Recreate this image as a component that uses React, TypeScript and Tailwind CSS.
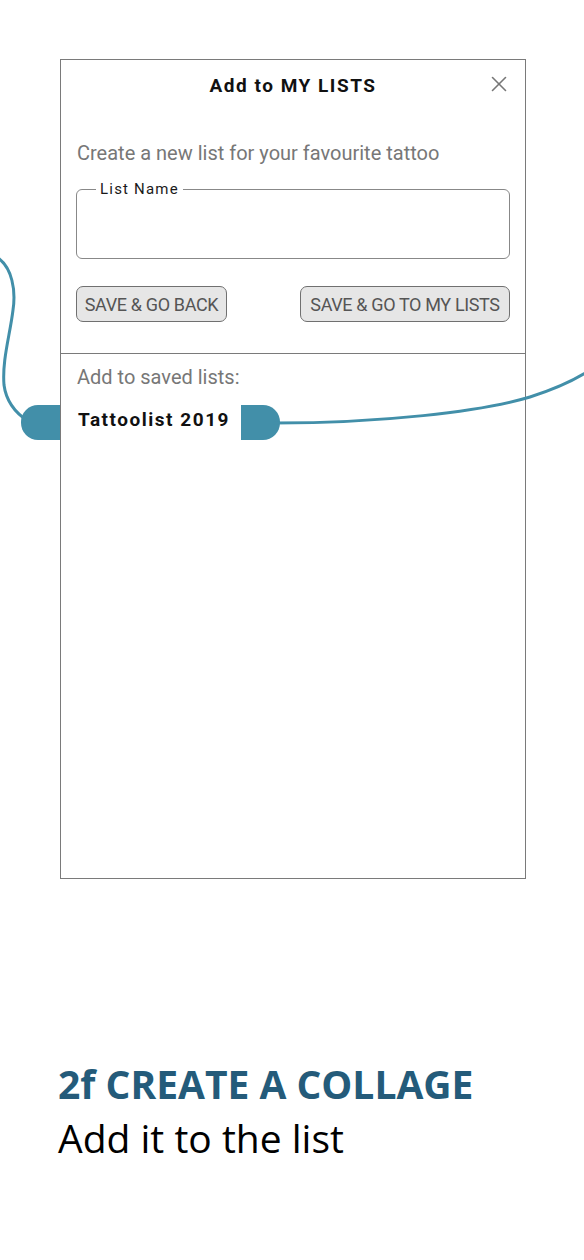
import { X } from "lucide-react";

const roboto = { fontFamily: "Roboto, 'Liberation Sans', sans-serif" };

export default function App() {
  return (
    <div className="relative w-[584px] h-[1260px] bg-white overflow-hidden">
      {/* dialog */}
      <div className="ml-[60px] mt-[59px] w-[466px] h-[820px] border border-[#7a7a7a] flex flex-col" style={roboto}>
        <div className="relative h-[54px] flex items-center justify-center">
          <span className="text-[19px] font-bold tracking-[0.08em] text-[#111] mt-[-1px]">Add to MY LISTS</span>
          <X className="absolute right-[13px] top-[11px] text-[#777]" size={26} strokeWidth={1.5} />
        </div>

        <div className="px-[15px] pt-[25px]">
          <p className="pl-[1px] text-[20px] text-[#777] leading-[28px]">Create a new list for your favourite tattoo</p>

          <fieldset className="mt-[13px] h-[79px] border border-[#888] rounded-[6px] pl-[19px] pr-2">
            <legend className="px-[4px] text-[15px] tracking-[0.08em] text-[#1a1a1a] leading-[18px]">List Name</legend>
          </fieldset>

          <div className="mt-[27px] flex justify-between">
            <button className="w-[151px] h-[36px] border border-[#707070] rounded-[7px] bg-[#e6e6e6] text-[18px] text-[#555] tracking-[-0.02em] whitespace-nowrap">
              SAVE &amp; GO BACK
            </button>
            <button className="w-[210px] h-[36px] border border-[#707070] rounded-[7px] bg-[#e6e6e6] text-[18px] text-[#555] tracking-[-0.02em] whitespace-nowrap">
              SAVE &amp; GO TO MY LISTS
            </button>
          </div>
        </div>

        <div className="mt-[31px] border-t border-[#7a7a7a]" />

        <div className="px-[16px] pt-[9px]">
          <p className="text-[20px] text-[#777] leading-[28px]">Add to saved lists:</p>
          <p className="mt-[17px] pl-[1px] text-[19px] font-bold tracking-[0.08em] text-[#111] leading-[24px]">Tattoolist 2019</p>
        </div>
      </div>

      {/* connector tabs */}
      <div className="absolute left-[21px] top-[405px] w-[39px] h-[35px] bg-[#428fa9] rounded-l-[17px]" />
      <div className="absolute left-[241px] top-[405px] w-[39px] h-[35px] bg-[#428fa9] rounded-r-[17px]" />

      {/* connector lines */}
      <svg className="absolute inset-0 pointer-events-none" width="584" height="1260" viewBox="0 0 584 1260" fill="none">
        <path
          d="M -2 258 C 12 268, 16 290, 13 310 C 10 335, 2 360, 4 385 C 6 400, 14 412, 28 421"
          stroke="#428fa9"
          strokeWidth="3"
          strokeLinecap="round"
        />
        <path
          d="M 275 423 C 380 423, 480 412, 530 397 C 555 389, 575 380, 590 370"
          stroke="#428fa9"
          strokeWidth="3"
          strokeLinecap="round"
        />
      </svg>

      {/* caption */}
      <div className="pl-[58px] mt-[178px]" style={{ fontFamily: "'Open Sans', 'Liberation Sans', sans-serif" }}>
        <h2 className="text-[39px] font-bold text-[#245b7a] leading-[54px]">2f CREATE A COLLAGE</h2>
        <p className="text-[39px] text-black leading-[54px]">Add it to the list</p>
      </div>
    </div>
  );
}
